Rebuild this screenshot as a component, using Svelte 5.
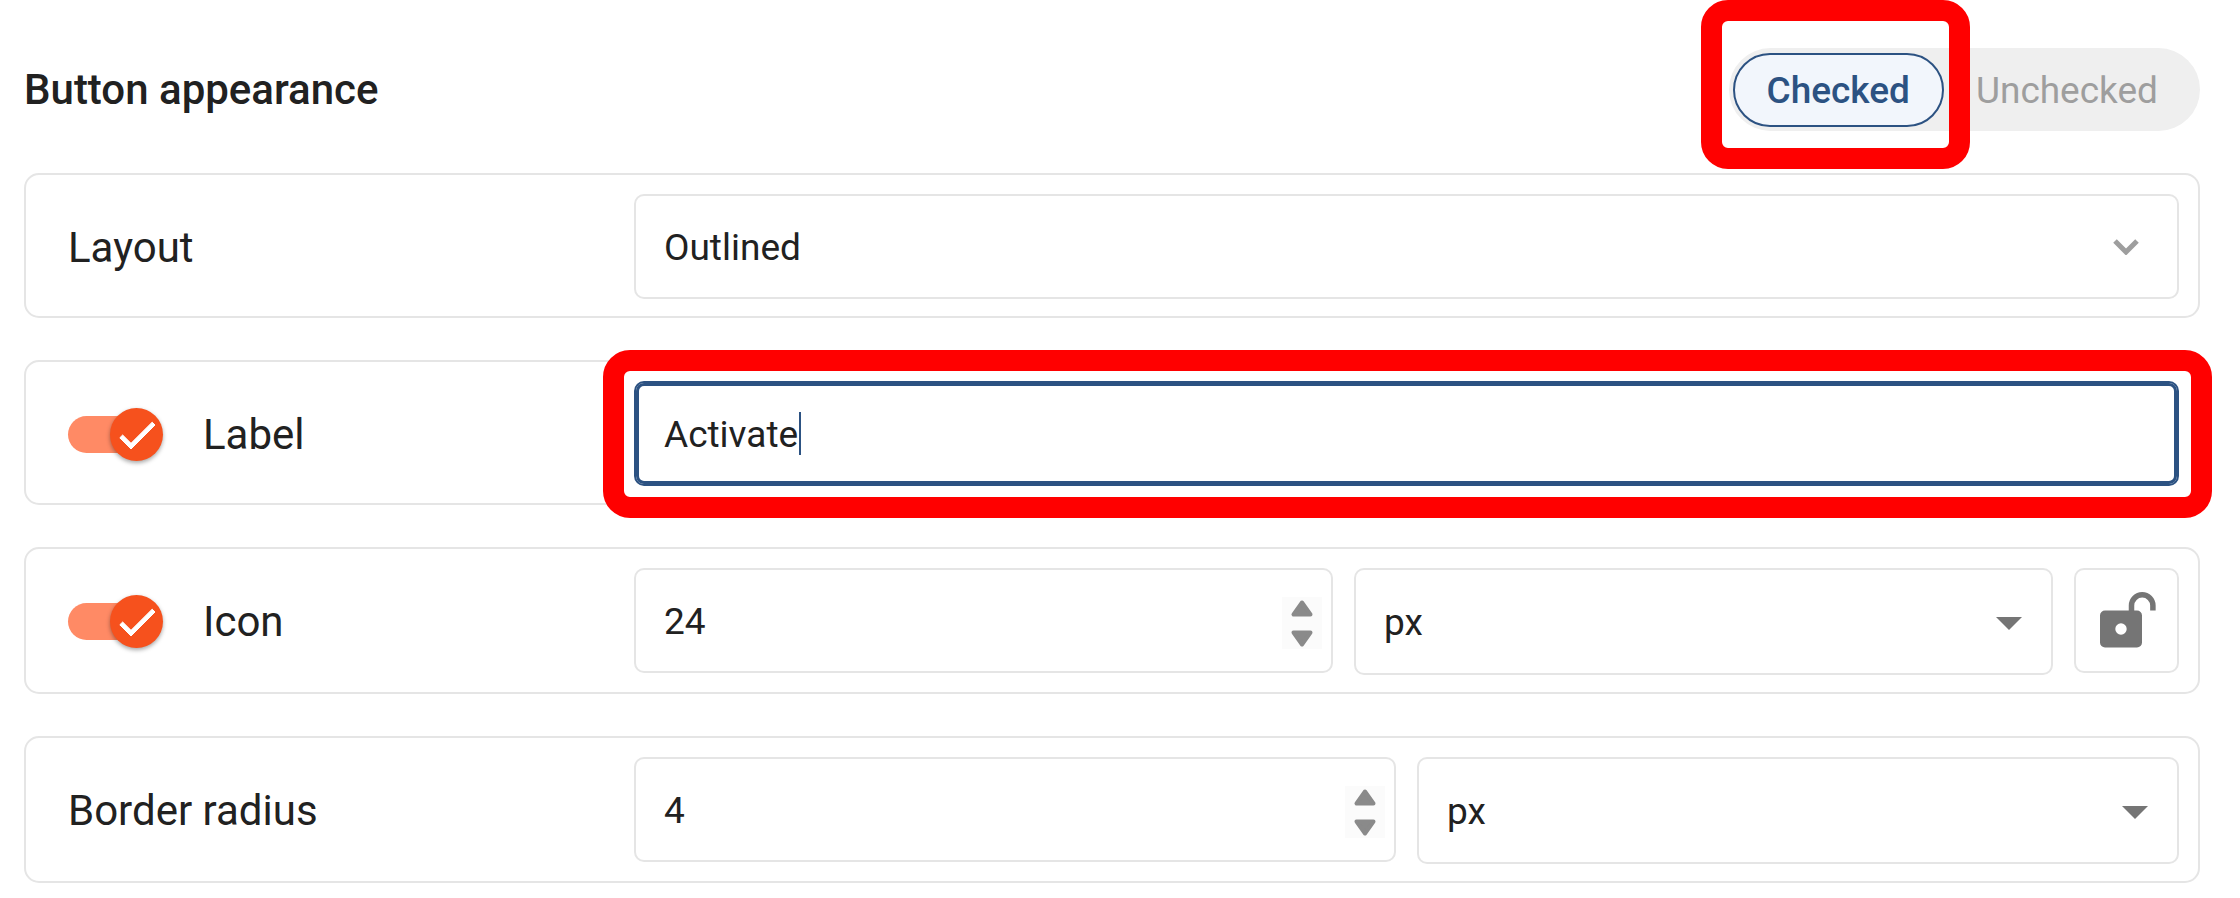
<script>
  let appearance = $state('checked');
  let layout = $state('Outlined');
  let label = $state('Activate');
  let showLabel = $state(true);
  let showIcon = $state(true);
  let iconSize = $state(24);
  let iconUnit = $state('px');
  let radius = $state(4);
  let radiusUnit = $state('px');
</script>

{#snippet toggleIcon()}
  <span class="track"></span>
  <span class="thumb">
    <svg viewBox="0 0 24 24" width="48" height="48" aria-hidden="true">
      <path
        d="M9 16.17 4.83 12l-1.42 1.41L9 19 21 7l-1.41-1.41z"
        fill="#fff"
        stroke="#fff"
        stroke-width="0.5" />
    </svg>
  </span>
{/snippet}

{#snippet stepper(name, step)}
  <span class="stepper">
    <button type="button" aria-label={`Increase ${name}`} onclick={() => step(1)}>
      <svg viewBox="0 0 40 26" width="40" height="26" aria-hidden="true">
        <path d="M20 5.500 11.500 17.500H28.500Z" />
      </svg>
    </button>
    <button type="button" aria-label={`Decrease ${name}`} onclick={() => step(-1)}>
      <svg viewBox="0 0 40 26" width="40" height="26" aria-hidden="true">
        <path d="M20 21.500 11.500 9.500H28.500Z" />
      </svg>
    </button>
  </span>
{/snippet}

{#snippet dropArrow()}
  <svg class="arrow" viewBox="0 0 26 13" width="26" height="13" aria-hidden="true">
    <path d="M0 0H26L13 13Z" fill="#757575" />
  </svg>
{/snippet}

<main>
  <header>
    <h1>Button appearance</h1>
    <div class="segments" role="group" aria-label="Button state">
      <div class="marked">
        <button
          type="button"
          class:active={appearance === 'checked'}
          aria-pressed={appearance === 'checked'}
          onclick={() => (appearance = 'checked')}>Checked</button>
        <span class="marker marker-state"></span>
      </div>
      <button
        type="button"
        class:active={appearance === 'unchecked'}
        aria-pressed={appearance === 'unchecked'}
        onclick={() => (appearance = 'unchecked')}>Unchecked</button>
    </div>
  </header>

  <section class="card">
    <div class="name"><label for="layout">Layout</label></div>
    <div class="controls">
      <div class="field">
        <select id="layout" bind:value={layout}>
          <option>Outlined</option>
        </select>
        <svg class="chevron" viewBox="0 0 26 16" width="26" height="16" aria-hidden="true">
          <path d="M2 2 13 13 24 2" fill="none" stroke="#9e9e9e" stroke-width="5" />
        </svg>
      </div>
    </div>
  </section>

  <section class="card">
    <div class="name">
      <span class="toggle">
        <input type="checkbox" aria-label="Show label" bind:checked={showLabel} />
        {@render toggleIcon()}
      </span>
      <label for="label">Label</label>
    </div>
    <div class="controls">
      <div class="field focused">
        <input id="label" type="text" bind:value={label} />
        <span class="caret"></span>
        <span class="marker marker-label"></span>
      </div>
    </div>
  </section>

  <section class="card">
    <div class="name">
      <span class="toggle">
        <input type="checkbox" aria-label="Show icon" bind:checked={showIcon} />
        {@render toggleIcon()}
      </span>
      <label for="icon-size">Icon</label>
    </div>
    <div class="controls">
      <div class="field">
        <input id="icon-size" type="number" bind:value={iconSize} />
        {@render stepper('icon size', (n) => (iconSize += n))}
      </div>
      <div class="field unit">
        <select aria-label="Icon size unit" bind:value={iconUnit}>
          <option>px</option>
        </select>
        {@render dropArrow()}
      </div>
      <button type="button" class="lock" aria-label="Lock aspect ratio">
        <svg viewBox="-1 1 60 60" width="60" height="60" aria-hidden="true">
          <path
            fill="#757575"
            fill-rule="evenodd"
            d="M7 20.500H39a5 5 0 0 1 5 5V52.500a5 5 0 0 1-5 5H7a5 5 0 0 1-5-5V25.500a5 5 0 0 1 5-5ZM23 33.300a5.700 5.700 0 1 0 0 11.400a5.700 5.700 0 1 0 0-11.400Z" />
          <path d="M33.500 21V15.500a10.700 10.700 0 0 1 21.400 0V20.500" fill="none" stroke="#757575" stroke-width="5.500" />
        </svg>
      </button>
    </div>
  </section>

  <section class="card">
    <div class="name"><label for="radius">Border radius</label></div>
    <div class="controls">
      <div class="field">
        <input id="radius" type="number" bind:value={radius} />
        {@render stepper('border radius', (n) => (radius += n))}
      </div>
      <div class="field unit">
        <select aria-label="Border radius unit" bind:value={radiusUnit}>
          <option>px</option>
        </select>
        {@render dropArrow()}
      </div>
    </div>
  </section>
</main>

<style>
  :global(body) {
    background: #fff;
  }

  main {
    display: flex;
    flex-direction: column;
    gap: 42px;
    padding: 48px 40px 14px 24px;
    font-family: Roboto, sans-serif;
    font-size: 42px;
    color: #212121;
  }

  main :global(*) {
    box-sizing: border-box;
  }

  button,
  input,
  select {
    font: inherit;
    color: inherit;
    margin: 0;
  }

  header {
    display: flex;
    align-items: center;
    justify-content: space-between;
  }

  h1 {
    margin: 0;
    font-size: 42px;
    font-weight: 500;
    line-height: 50px;
  }

  .segments {
    display: flex;
    padding: 5px 4px 4px;
    border-radius: 42px;
    background: #efefef;
    font-size: 37px;
  }

  .segments button {
    height: 74px;
    padding: 0 36px 0 30px;
    border: 2px solid transparent;
    border-radius: 37px;
    background: none;
    color: #9e9e9e;
  }

  .segments button.active {
    padding: 0 32px;
    border-color: #2c5282;
    background: #f2f6fc;
    color: #2c5282;
    font-weight: 500;
  }

  .marked {
    position: relative;
  }

  .marker {
    position: absolute;
    z-index: 1;
    border: 21px solid #f00;
    border-radius: 27px;
    pointer-events: none;
  }

  .marker-state {
    inset: -53px -26px -42px -32px;
  }

  .marker-label {
    inset: -33px -35px -34px -33px;
  }

  .card {
    display: grid;
    grid-template-columns: 566px 1fr;
    align-items: start;
    padding: 19px 19px 17px 42px;
    border: 2px solid #e5e5e5;
    border-radius: 15px;
  }

  .name {
    display: flex;
    align-items: center;
    gap: 40px;
    height: 105px;
    padding-top: 2px;
  }

  .controls {
    display: flex;
    align-items: start;
    gap: 21px;
  }

  .field {
    position: relative;
    display: flex;
    flex: 1 1 0;
    min-width: 0;
    height: 105px;
    border: 2px solid #e5e5e5;
    border-radius: 10px;
    font-size: 37px;
  }

  .unit {
    height: 107px;
  }

  .field input,
  .field select {
    flex: 1;
    width: 100%;
    min-width: 0;
    padding: 2px 28px 0;
    border: 0;
    border-radius: 8px;
    outline: 0;
    background: none;
    appearance: none;
  }

  .field input[type='number'] {
    appearance: textfield;
  }

  .focused {
    border-color: #2c5282;
    box-shadow: inset 0 0 0 3px #2c5282;
  }

  .caret {
    position: absolute;
    top: 29px;
    left: 163px;
    width: 2px;
    height: 43px;
    background: #2c5282;
  }

  .chevron,
  .arrow {
    position: absolute;
    pointer-events: none;
  }

  .chevron {
    top: 43px;
    right: 38px;
  }

  .arrow {
    top: 47px;
    right: 29px;
  }

  .stepper {
    position: absolute;
    top: 27px;
    right: 9px;
    display: flex;
    flex-direction: column;
    background: #fbfbfb;
  }

  .stepper button {
    display: flex;
    padding: 0;
    border: 0;
    background: none;
  }

  .stepper path {
    fill: #8a8a8a;
    stroke: #8a8a8a;
    stroke-width: 4;
    stroke-linejoin: round;
  }

  .lock {
    display: grid;
    place-items: center;
    width: 105px;
    height: 105px;
    padding: 0;
    border: 2px solid #e5e5e5;
    border-radius: 10px;
    background: none;
  }

  .toggle {
    position: relative;
    display: flex;
    align-items: center;
    width: 95px;
    height: 53px;
  }

  .toggle input {
    position: absolute;
    inset: 0;
    z-index: 1;
    width: 100%;
    height: 100%;
    opacity: 0;
  }

  .track {
    width: 84px;
    height: 37px;
    border-radius: 19px;
    background: #ff8a65;
  }

  .thumb {
    position: absolute;
    right: 0;
    display: grid;
    place-items: center;
    width: 53px;
    height: 53px;
    border-radius: 50%;
    background: #f6511d;
    box-shadow: 0 2px 4px rgb(0 0 0 / 35%);
  }
</style>
